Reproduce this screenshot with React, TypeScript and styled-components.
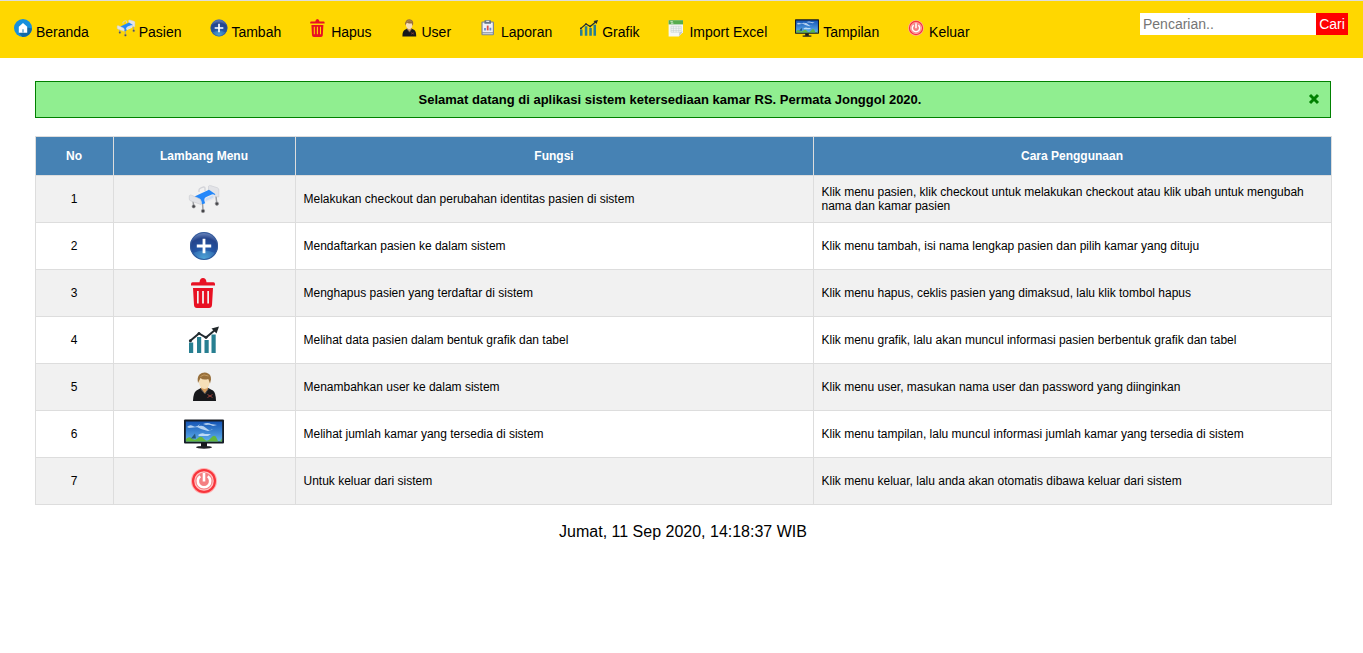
import React from 'react';
import styled, { createGlobalStyle } from 'styled-components';

const GlobalStyle = createGlobalStyle`
  * { box-sizing: border-box; }
  body {
    margin: 0;
    background: #fff;
    color: #000;
    font-family: Arial, "Liberation Sans", sans-serif;
  }
`;

const NavBar = styled.nav`
  display: flex;
  justify-content: space-between;
  align-items: flex-start;
  height: 58px;
  padding: 12px 15px 0 0;
  border-top: 1px solid #ddd;
  background: #ffd700;
`;

const Menu = styled.ul`
  display: flex;
  margin: 0;
  padding: 6px 0 0;
  list-style: none;
`;

const MenuLink = styled.a`
  display: flex;
  align-items: baseline;
  gap: 3.9px;
  padding: 0 14px;
  font-size: 14px;
  line-height: 16px;
  color: #000;
  text-decoration: none;
  white-space: nowrap;
`;

const SearchForm = styled.form`
  display: flex;
  height: 22px;
`;

const SearchInput = styled.input`
  width: 176px;
  padding: 0 4px 0 3px;
  border: 0;
  background: #fff;
  font: 14px Arial, "Liberation Sans", sans-serif;
  &::placeholder { color: #757575; }
`;

const SearchButton = styled.button`
  width: 32px;
  padding: 0 3px;
  border: 0;
  background: #f00;
  color: #fff;
  font: 14px Arial, "Liberation Sans", sans-serif;
`;

const Content = styled.main`
  padding: 23px 32px 0 35px;
`;

const Alert = styled.div`
  display: flex;
  align-items: center;
  width: 1296px;
  height: 37px;
  margin-bottom: 18px;
  border: 1px solid #008000;
  background: #90ee90;
`;

const AlertText = styled.strong`
  flex: 1;
  font-size: 13px;
  line-height: 15px;
  text-align: center;
`;

const CloseButton = styled.button`
  display: flex;
  justify-content: center;
  width: 26px;
  padding: 0 6px 2px 0;
  border: 0;
  background: none;
`;

const GuideTable = styled.table`
  width: 1297px;
  table-layout: fixed;
  border-collapse: collapse;
  font-size: 12px;
  line-height: 14px;
`;

const Column = styled.col<{ $width: number }>`
  width: ${(p) => p.$width}px;
`;

const HeadCell = styled.th`
  height: 39px;
  padding: 0 8.5px 0 7.5px;
  border: 1px solid #ddd;
  background: #4682b4;
  color: #fff;
`;

const Row = styled.tr`
  height: 47px;
  &:nth-child(odd) { background: #f1f1f1; }
`;

const Cell = styled.td<{ $center?: boolean }>`
  padding: 0 8.5px 0 7.5px;
  border: 1px solid #ddd;
  text-align: ${(p) => (p.$center ? 'center' : 'left')};
  vertical-align: middle;
`;

const Glyph = styled.svg`
  display: inline-block;
  flex: none;
  overflow: visible;
  vertical-align: middle;
`;

const Definitions = styled.svg`
  display: block;
`;

const Clock = styled.p`
  margin: 17px 0 0;
  font-size: 16px;
  line-height: 19px;
  text-align: center;
`;

type IconName =
  | 'home' | 'bed' | 'plus' | 'trash' | 'user' | 'report' | 'chart' | 'sheet' | 'monitor' | 'power';

const drawings: Record<IconName, React.ReactNode> = {
  home: (
    <>
      <circle cx="15" cy="15" r="15" fill="#1790dc" />
      <path d="M22 14 30 16A15 15 0 0 1 14 30L8 23Z" fill="#1268a5" />
      <path d="M15 6.5 22 13V23H8V13Z" fill="#fff" />
      <path d="M13.5 17H16.5V23H13.5Z" fill="#7db4d8" />
    </>
  ),
  bed: (
    <>
      <path d="M4 17 4.7 22M13.5 19 14 26M27 12 27.7 19" stroke="#9d9fa3" strokeWidth="1.5" />
      <path d="M19.5 2.2Q20 1.2 21.5 1.6L28.5 3.8Q29.8 4.4 29.8 6V13L25 12 19.5 8Z" fill="#e2e3e7" stroke="#cfd0d5" strokeWidth=".7" />
      <path d="M10 8V6Q10 4.5 12 3.8L14.5 3Q16 2.8 16 4.5V7" fill="none" stroke="#d3d4d9" strokeWidth="1.4" />
      <path d="M5.5 12.5 20 5.8 26.5 10.2 13 18Z" fill="#2387fa" />
      <path d="M12.5 15 18 12.5 17 17 13.5 20Z" fill="#2387fa" />
      <path d="M.3 11.8Q1 10.5 2.5 11.2L10.5 14.8Q12 15.5 12 17V20.5L1.2 16.7Q.3 16.2 .3 15Z" fill="#e2e3e7" stroke="#cdced3" strokeWidth=".7" />
      <path d="M16 18V15.5Q16 14.2 17.4 13.5L23 11.2Q25 10.5 25 12.2V14L16 18Z" fill="#c9dcf5" stroke="#e9e9ee" strokeWidth="1.3" />
      <path d="M12.8 19.4 15.8 18.2" stroke="#2387fa" strokeWidth="2" />
      <g fill="#454548" stroke="#929296" strokeWidth=".7">
        <circle cx="4.7" cy="22.4" r="1.6" />
        <circle cx="14" cy="27" r="1.7" />
        <circle cx="27.9" cy="19.7" r="1.7" />
      </g>
    </>
  ),
  plus: (
    <>
      <circle cx="15" cy="15" r="14" fill="url(#plusFill)" />
      <path d="M4 22Q15 17 26 22A13.2 13.2 0 0 1 4 22Z" fill="#55a9d7" opacity=".35" />
      <circle cx="15" cy="15" r="13.5" fill="none" stroke="#335b9b" />
      <path d="M15 7.8V22.2M7.8 15H22.2" stroke="#fff" strokeWidth="2.8" />
    </>
  ),
  trash: (
    <>
      <path d="M2 6Q2 4.2 3.5 4.2H10.5Q11 0 14 0T17.5 4.2H24.5Q26 4.2 26 6V7.5H2Z" fill="#e81123" />
      <path fillRule="evenodd" d="M4 10H24L23 27Q22.8 30 20 30H8Q5.2 30 5 27ZM8 13V25.5H9.7V13ZM13.1 13V25.5H14.9V13ZM18.3 13V25.5H20V13Z" fill="#e81123" />
    </>
  ),
  user: (
    <>
      <path d="M4 29Q4 21 7.5 18.5L12 16H19L24 18.5Q27 21 27 29Z" fill="#17181b" />
      <path d="M12 14H19V17.5L16 22 12 17.5Z" fill="#d29a5b" />
      <path d="m11.5 16.5 4.3 5.5 4-5.5" fill="none" stroke="#44464b" />
      <path d="M10 7Q15 4 20.7 7V11Q20 16.5 15.5 17 11 16.5 10 11Z" fill="#f6dfb8" />
      <path d="M9 11Q7.8 5 10.5 2.5T17.5 .7Q22.3 2 22 7.5L21 11.5 19.3 7Q14 8.5 11.5 6Z" fill="#98703c" />
      <path d="M11.5 4.5Q14.5 1.5 19.5 4" fill="none" stroke="#c39a5e" />
      <path d="m18.5 22.5 5 3m0-3-5 3" stroke="#b34a42" strokeWidth=".8" />
    </>
  ),
  report: (
    <>
      <rect x="4" y="4" width="21" height="23" rx="2" fill="#7e8794" />
      <rect x="6" y="6" width="17" height="16" fill="#f0f1f5" />
      <rect x="6" y="23" width="17" height="2.5" fill="#c7ccd4" />
      <rect x="9" y="2" width="11" height="6" rx="1" fill="#65758a" />
      <path d="M12 4H17" stroke="#e1e6ed" strokeWidth="2" />
      <path d="M10 19V15M19 19V14.5" stroke="#668bd0" strokeWidth="3" />
      <path d="M14.5 19V11" stroke="#dd5047" strokeWidth="3" />
    </>
  ),
  chart: (
    <>
      <path d="M0 17.5H4.2V28H0ZM8 12H12.2V28H8ZM15.5 15H19.7V28H15.5ZM22.5 9.5H26.7V28H22.5Z" fill="#277f91" />
      <path d="M1 16 10 8.5 17 12.5 26 5" fill="none" stroke="#222b30" strokeWidth="2" />
      <path d="M22.5 3.5 30 1.5 27.5 8.5Z" fill="#20272a" />
      <circle cx="1.4" cy="15.7" r="1.5" fill="#222b30" />
      <circle cx="10" cy="8.5" r="1.5" fill="#222b30" />
      <circle cx="17" cy="12.3" r="1.5" fill="#222b30" />
    </>
  ),
  sheet: (
    <>
      <path d="M1 2H25V22L18 29H1Z" fill="#f5f7f6" />
      <path d="M1 2H25V9H1Z" fill="#55ad4e" />
      <path d="M4 4.5H8M5 7H9" stroke="#ddf1d7" strokeWidth="1.5" />
      <path d="M5 12H22V22H5ZM5 15.5H22M5 19H22M9 12V22M13.5 12V22M18 12V22" fill="none" stroke="#c3d0ce" />
      <path d="m18 29 1-7 6-1Z" fill="#c4cacc" />
    </>
  ),
  monitor: (
    <>
      <rect width="40" height="24" y=".5" rx="1" fill="#151b25" />
      <rect x="1.8" y="2.5" width="36.4" height="20" fill="url(#skyFill)" />
      <path d="M3 8Q6 5 9 7T16 5L14 8 5 9ZM13 8Q18 5 22 9T29 10L24 12 17 10ZM19 5Q24 3 27 5L33 6 29 7Q25 5 22 6ZM14 16Q18 13 21 15L27 15 24 17H15Z" fill="#e4f3ff" opacity=".75" />
      <path d="M2 20Q5 17 8 19.5T14 19 20 20 27 19 33 20 38 19V22.5H2Z" fill="#64b63c" />
      <path d="m7 19.5 4-5 1 5Z" fill="#25577c" />
      <path d="M17 24H23V28H17Z" fill="#17181a" />
      <ellipse cx="20" cy="28.3" rx="8" ry="1.4" fill="#202124" />
    </>
  ),
  power: (
    <>
      <circle cx="15" cy="15" r="13" fill="#ffb0b0" />
      <circle cx="15" cy="15" r="12" fill="#f8343b" />
      <circle cx="15" cy="15" r="9.2" fill="#f47f82" stroke="#ffc2c2" strokeWidth="1.2" />
      <path d="M11.2 10.2A6.2 6.2 0 1 0 18.8 10.2M15 7V15.5" fill="none" stroke="#fff" strokeWidth="2.6" />
    </>
  ),
};

function Icon({ name, height = 30 }: { name: IconName; height?: number }) {
  const unitWidth = name === 'monitor' ? 40 : 30;
  return (
    <Glyph width={(unitWidth * height) / 30} height={height} viewBox={`0 0 ${unitWidth} 30`}>
      {drawings[name]}
    </Glyph>
  );
}

const menuItems: { icon: IconName; label: string }[] = [
  { icon: 'home', label: 'Beranda' },
  { icon: 'bed', label: 'Pasien' },
  { icon: 'plus', label: 'Tambah' },
  { icon: 'trash', label: 'Hapus' },
  { icon: 'user', label: 'User' },
  { icon: 'report', label: 'Laporan' },
  { icon: 'chart', label: 'Grafik' },
  { icon: 'sheet', label: 'Import Excel' },
  { icon: 'monitor', label: 'Tampilan' },
  { icon: 'power', label: 'Keluar' },
];

const guideRows: { icon: IconName; purpose: string; usage: string }[] = [
  { icon: 'bed', purpose: 'Melakukan checkout dan perubahan identitas pasien di sistem', usage: 'Klik menu pasien, klik checkout untuk melakukan checkout atau klik ubah untuk mengubah nama dan kamar pasien' },
  { icon: 'plus', purpose: 'Mendaftarkan pasien ke dalam sistem', usage: 'Klik menu tambah, isi nama lengkap pasien dan pilih kamar yang dituju' },
  { icon: 'trash', purpose: 'Menghapus pasien yang terdaftar di sistem', usage: 'Klik menu hapus, ceklis pasien yang dimaksud, lalu klik tombol hapus' },
  { icon: 'chart', purpose: 'Melihat data pasien dalam bentuk grafik dan tabel', usage: 'Klik menu grafik, lalu akan muncul informasi pasien berbentuk grafik dan tabel' },
  { icon: 'user', purpose: 'Menambahkan user ke dalam sistem', usage: 'Klik menu user, masukan nama user dan password yang diinginkan' },
  { icon: 'monitor', purpose: 'Melihat jumlah kamar yang tersedia di sistem', usage: 'Klik menu tampilan, lalu muncul informasi jumlah kamar yang tersedia di sistem' },
  { icon: 'power', purpose: 'Untuk keluar dari sistem', usage: 'Klik menu keluar, lalu anda akan otomatis dibawa keluar dari sistem' },
];

export default function App() {
  return (
    <>
      <GlobalStyle />
      <Definitions width="0" height="0">
        <defs>
          <radialGradient id="plusFill" cx=".5" cy=".95" r=".9">
            <stop offset="0" stopColor="#4ba3d8" />
            <stop offset=".4" stopColor="#2459a8" />
            <stop offset=".8" stopColor="#24448b" />
            <stop offset="1" stopColor="#6580b8" />
          </radialGradient>
          <linearGradient id="skyFill" x2="0" y2="1">
            <stop stopColor="#1555b5" />
            <stop offset="1" stopColor="#60b1ed" />
          </linearGradient>
        </defs>
      </Definitions>
      <NavBar>
        <Menu>
          {menuItems.map((item) => (
            <li key={item.label}>
              <MenuLink href="#">
                <Icon name={item.icon} height={18} />
                <span>{item.label}</span>
              </MenuLink>
            </li>
          ))}
        </Menu>
        <SearchForm>
          <SearchInput placeholder="Pencarian.." />
          <SearchButton type="button">Cari</SearchButton>
        </SearchForm>
      </NavBar>
      <Content>
        <Alert>
          <AlertText>Selamat datang di aplikasi sistem ketersediaan kamar RS. Permata Jonggol 2020.</AlertText>
          <CloseButton aria-label="Tutup">
            <Glyph width="12" height="12" viewBox="0 0 12 12">
              <path d="M2 2 10 10M10 2 2 10" stroke="#008000" strokeWidth="3" />
            </Glyph>
          </CloseButton>
        </Alert>
        <GuideTable>
          <colgroup>
            <Column $width={78} />
            <Column $width={182} />
            <Column $width={518} />
            <Column $width={518} />
          </colgroup>
          <thead>
            <tr>
              <HeadCell>No</HeadCell>
              <HeadCell>Lambang Menu</HeadCell>
              <HeadCell>Fungsi</HeadCell>
              <HeadCell>Cara Penggunaan</HeadCell>
            </tr>
          </thead>
          <tbody>
            {guideRows.map((row, index) => (
              <Row key={row.icon}>
                <Cell $center>{index + 1}</Cell>
                <Cell $center><Icon name={row.icon} /></Cell>
                <Cell>{row.purpose}</Cell>
                <Cell>{row.usage}</Cell>
              </Row>
            ))}
          </tbody>
        </GuideTable>
        <Clock>Jumat, 11 Sep 2020, 14:18:37 WIB</Clock>
      </Content>
    </>
  );
}
